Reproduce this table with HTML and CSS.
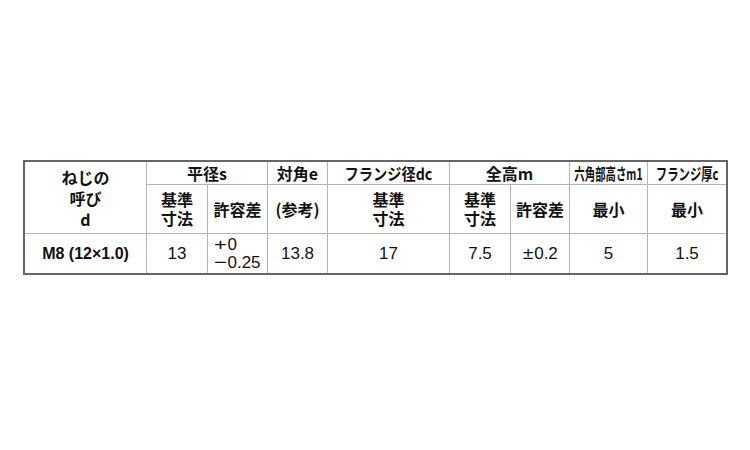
FILE: index.html
```html
<!DOCTYPE html>
<html lang="ja">
<head>
<meta charset="utf-8">
<link rel="stylesheet" href="styles.css">
</head>
<body>
<table class="spec">
  <colgroup>
    <col class="c-name">
    <col class="c61">
    <col class="c60">
    <col class="c60">
    <col class="c122">
    <col class="c61">
    <col class="c59">
    <col class="c78">
    <col class="c78">
  </colgroup>
  <tr class="r1">
    <th rowspan="2" class="name">ねじの<br>呼び<br>d</th>
    <th colspan="2">平径s</th>
    <th>対角e</th>
    <th><span class="narrow n0">フランジ径dc</span></th>
    <th colspan="2">全高m</th>
    <th><span class="narrow n1">六角部高さm1</span></th>
    <th class="last"><span class="narrow n2">フランジ厚c</span></th>
  </tr>
  <tr class="r2">
    <th class="two">基準<br>寸法</th>
    <th>許容差</th>
    <th>(参考)</th>
    <th class="two">基準<br>寸法</th>
    <th class="two">基準<br>寸法</th>
    <th>許容差</th>
    <th>最小</th>
    <th class="last">最小</th>
  </tr>
  <tr class="r3">
    <td class="size">M8 (12×1.0)</td>
    <td>13</td>
    <td><span class="tol"><span class="sign">+</span>0<br><span class="sign">−</span>0.25</span></td>
    <td>13.8</td>
    <td>17</td>
    <td>7.5</td>
    <td><span class="sign pm">±</span>0.2</td>
    <td>5</td>
    <td class="last">1.5</td>
  </tr>
</table>
</body>
</html>
```

FILE: styles.css
```css
html, body {
  margin: 0;
  padding: 0;
  background: #ffffff;
}

.spec {
  margin: 160px 0 0 23px;
  border: 2px solid #666666;
  border-collapse: separate;
  border-spacing: 0;
  table-layout: fixed;
  width: 705px;
  color: #111111;
}

.c-name { width: 122px; }
.c61 { width: 61px; }
.c60 { width: 60px; }
.c122 { width: 122px; }
.c59 { width: 59px; }
.c78 { width: 78px; }

.spec th,
.spec td {
  padding: 0;
  border-right: 1px solid #b4b4b4;
  border-bottom: 1px solid #b4b4b4;
  text-align: center;
  vertical-align: middle;
  white-space: nowrap;
}

.spec .last { border-right: none; }
.spec .r3 td { border-bottom: none; }

.spec th {
  font-family: "Noto Sans CJK JP", "Liberation Sans", sans-serif;
  font-weight: 700;
  font-size: 16px;
  line-height: 19px;
}

.r1 { height: 23px; }
.r2 { height: 49px; }
.r3 { height: 39px; }

.spec th.name {
  line-height: 21px;
  padding-top: 1px;
}

.narrow {
  display: inline-block;
  transform-origin: center;
}
.n0 { transform: scaleX(0.89); margin: 0 -6px; }
.n1 { transform: scaleX(0.65); margin: 0 -18px; }
.n2 { transform: scaleX(0.71); margin: 0 -13px; }

.spec td {
  font-family: "Liberation Sans", "Noto Sans CJK JP", sans-serif;
  font-weight: 400;
  font-size: 17px;
  line-height: 18px;
}

.spec td.size {
  font-weight: 700;
  font-size: 16px;
}

.tol {
  display: inline-block;
  text-align: left;
}

.sign {
  display: inline-block;
  width: 13px;
  text-align: center;
  transform: scaleX(1.3);
}

.sign.pm {
  width: 12px;
  transform: scaleX(1.15);
}
```
